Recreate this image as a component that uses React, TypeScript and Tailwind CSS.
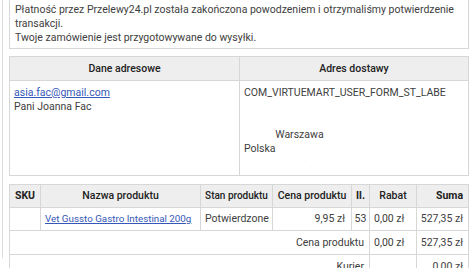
import React from "react";

const cell = "border border-[#d7d7d7]";

export default function App() {
  return (
    <div className="w-[476px] h-[268px] overflow-hidden bg-white text-[#404040] font-['Roboto',sans-serif]">
      <div className="ml-[2px] h-full border-l border-[#dcdcdc] pl-[6px] pr-[7px]">
        {/* status message */}
        <div className="-mt-[10px] border border-[#d7d7d7] pt-[12px] pb-[3px] px-[5px] text-[10.5px] leading-[14px]">
          <p>Płatność przez Przelewy24.pl została zakończona powodzeniem i otrzymaliśmy potwierdzenie transakcji.</p>
          <p>Twoje zamówienie jest przygotowywane do wysyłki.</p>
        </div>

        {/* addresses */}
        <table className="mt-[7px] w-full border-collapse table-fixed text-[10.5px] leading-[14px]">
          <colgroup>
            <col className="w-[230px]" />
            <col />
          </colgroup>
          <thead>
            <tr className="bg-[#eeeeee] h-[24px]">
              <th className={`${cell} p-0 font-medium text-[#222]`}>Dane adresowe</th>
              <th className={`${cell} p-0 font-medium text-[#222]`}>Adres dostawy</th>
            </tr>
          </thead>
          <tbody>
            <tr className="h-[95px]">
              <td className={`${cell} align-top px-[4px] pt-[5px] pb-0`}>
                <a href="#" className="text-[#3557b7] underline">asia.fac@gmail.com</a>
                <div>Pani Joanna Fac</div>
              </td>
              <td className={`${cell} align-top px-[4px] pt-[5px] pb-0`}>
                <div>COM_VIRTUEMART_USER_FORM_ST_LABE</div>
                <div className="h-[14px] text-[#e2e2e2] text-[6px]">&nbsp;·</div>
                <div className="h-[14px]" />
                <div className="h-[14px] pl-[30px]">
                  <span className="text-[#cfcfcf] text-[7px] leading-none align-top">'</span>Warszawa
                </div>
                <div className="h-[14px]">Polska</div>
                <div className="h-[10px] pl-[60px] text-[#dadada] text-[6px] leading-[10px]">·</div>
              </td>
            </tr>
          </tbody>
        </table>

        {/* order lines */}
        <table className="mt-[8px] w-full border-collapse table-fixed text-[10.5px] leading-[14px]">
          <colgroup>
            <col className="w-[31px]" />
            <col className="w-[160px]" />
            <col className="w-[72px]" />
            <col className="w-[79px]" />
            <col className="w-[18px]" />
            <col className="w-[47px]" />
            <col />
          </colgroup>
          <thead>
            <tr className="bg-[#eeeeee] h-[23px] text-[#222]">
              <th className={`${cell} p-0 font-bold`}>SKU</th>
              <th className={`${cell} p-0 font-medium`}>Nazwa produktu</th>
              <th className={`${cell} p-0 font-medium whitespace-nowrap text-[10px]`}>Stan produktu</th>
              <th className={`${cell} p-0 font-medium whitespace-nowrap`}>Cena produktu</th>
              <th className={`${cell} p-0 font-bold`}>Il.</th>
              <th className={`${cell} p-0 font-medium`}>Rabat</th>
              <th className={`${cell} p-0 font-bold text-right pr-[5px]`}>Suma</th>
            </tr>
          </thead>
          <tbody>
            <tr className="h-[23px]">
              <td className={cell}></td>
              <td className={`${cell} px-[4px] whitespace-nowrap`}>
                <a href="#" className="text-[#3557b7] underline text-[9.8px]">Vet Gussto Gastro Intestinal 200g</a>
              </td>
              <td className={`${cell} px-[4px]`}>Potwierdzone</td>
              <td className={`${cell} text-right pr-[6px]`}>9,95 zł</td>
              <td className={`${cell} text-center`}>53</td>
              <td className={`${cell} px-[4px] whitespace-nowrap`}>0,00 zł</td>
              <td className={`${cell} text-right pr-[5px] whitespace-nowrap`}>527,35 zł</td>
            </tr>
            <tr className="h-[24px]">
              <td colSpan={5} className={`${cell} text-right pr-[5px]`}>Cena produktu</td>
              <td className={`${cell} px-[4px] whitespace-nowrap`}>0,00 zł</td>
              <td className={`${cell} text-right pr-[5px] whitespace-nowrap`}>527,35 zł</td>
            </tr>
            <tr className="h-[24px]">
              <td colSpan={5} className={`${cell} text-right pr-[5px]`}>Kurier</td>
              <td className={cell}></td>
              <td className={`${cell} text-right pr-[5px] whitespace-nowrap`}>0,00 zł</td>
            </tr>
          </tbody>
        </table>
      </div>
    </div>
  );
}
